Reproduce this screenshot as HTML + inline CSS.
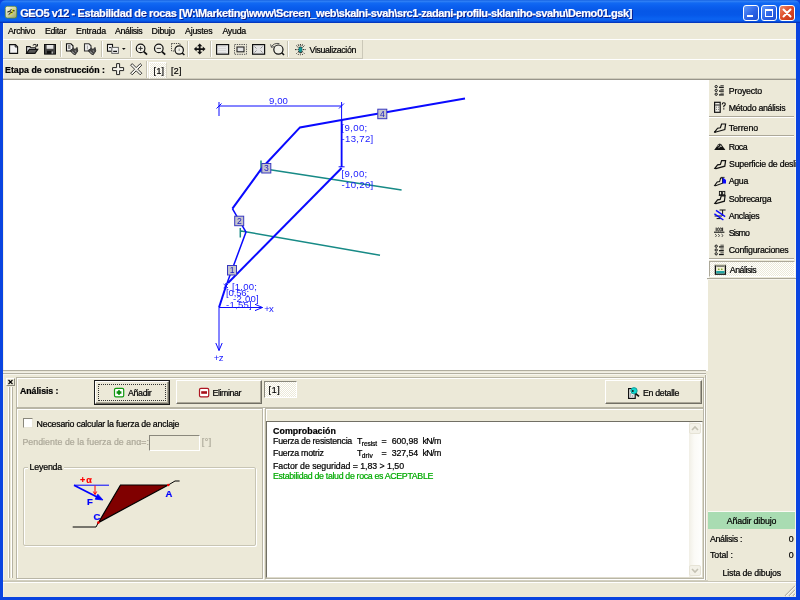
<!DOCTYPE html>
<html>
<head>
<meta charset="utf-8">
<title>GEO5 v12 - Estabilidad de rocas</title>
<style>
*{box-sizing:border-box;margin:0;padding:0}
html,body{width:800px;height:600px;overflow:hidden;background:#ece9d8}
body{font-family:"Liberation Sans",sans-serif;font-size:9px;color:#000;position:relative}
.a{position:absolute}
.t{position:absolute;white-space:nowrap;font-family:"Liberation Sans",sans-serif;-webkit-text-stroke:0.22px}
.hl{position:absolute;height:1px}
.vl{position:absolute;width:1px}
svg{position:absolute;overflow:visible}
#title{left:0;top:0;width:800px;height:23px;border-radius:6px 6px 0 0;background:linear-gradient(#0a56dc 0,#3484f6 1px,#1169f3 3px,#0b60ef 6px,#0657e7 11px,#0658e9 15px,#0b63f1 19px,#0a5cea 21px,#0540cc 22px,#032fb0 23px)}
.raised{border:1px solid #b9b6a6;box-shadow:inset 1px 1px 0 #fff,1px 1px 0 #fff}
.sunken{border:1px solid;border-color:#aca899 #fff #fff #aca899}
.btn{position:absolute;background:#ece9d8;border:1px solid;border-color:#fff #716f64 #716f64 #fff;box-shadow:inset -1px -1px 0 #aca899}
.sep{position:absolute;width:2px;border-left:1px solid #c5c2b2;border-right:1px solid #fff}
.hsep{position:absolute;height:2px;border-top:1px solid #aca899;border-bottom:1px solid #fff}
.chk{background-image:linear-gradient(45deg,#fff 25%,transparent 25%,transparent 75%,#fff 75%),linear-gradient(45deg,#fff 25%,transparent 25%,transparent 75%,#fff 75%);background-size:2px 2px;background-position:0 0,1px 1px;background-color:#ece9d8}

#txt{position:absolute;left:0;top:0;width:800px;height:600px;will-change:transform}

</style>
</head>
<body>
<!-- window frame -->
<div class="a" style="left:0;top:0;width:800px;height:600px;background:#0a44e0"></div>
<div id="title" class="a"></div>
<div class="a" style="left:3px;top:23px;width:793px;height:574px;background:#ece9d8"></div>
<div class="vl" style="left:3px;top:23px;height:574px;background:#f3f1e6"></div>
<!-- app icon -->
<svg style="left:5px;top:6.4px" width="12" height="12.4" viewBox="0 0 12 12.4"><defs><linearGradient id="ig" x1="0" y1="0" x2="1" y2="1"><stop offset="0" stop-color="#fbfbf0"/><stop offset="0.45" stop-color="#d4d8b0"/><stop offset="1" stop-color="#9aa458"/></linearGradient></defs><rect x="0.3" y="0.3" width="11.4" height="11.8" rx="2" fill="url(#ig)" stroke="#5d8a22" stroke-width="0.7"/><path d="M4 9.2 L7.4 7.4 L8.2 6 L8.8 3 L7.8 2.6 L6.8 5.6 L5.4 7.2 Z" fill="#dde614"/><path d="M2.4 6 L4.2 5.6 L6.4 3.2 M4.4 5.6 L7.4 6.6 M7.6 4.8 L9.6 4.8 M3.6 8.6 L5.6 7" stroke="#111" stroke-width="1" fill="none"/></svg>
<!-- caption buttons -->
<div class="a" style="left:743px;top:5px;width:16px;height:16px;border-radius:3px;border:1px solid #fff;background:linear-gradient(135deg,#5f98fa,#2c63e6 55%,#1f4fd0)"></div>
<div class="a" style="left:747px;top:15px;width:6px;height:2px;background:#fff"></div>
<div class="a" style="left:761px;top:5px;width:16px;height:16px;border-radius:3px;border:1px solid #fff;background:linear-gradient(135deg,#5f98fa,#2c63e6 55%,#1f4fd0)"></div>
<div class="a" style="left:765px;top:9px;width:8px;height:8px;border:1px solid #fff;border-top-width:2px"></div>
<div class="a" style="left:779px;top:5px;width:16px;height:16px;border-radius:3px;border:1px solid #fff;background:linear-gradient(135deg,#ee8a6a,#dc4a26 50%,#c13214)"></div>
<svg style="left:779px;top:5px" width="16" height="16" viewBox="0 0 16 16"><path d="M4.5 4.5 L11.5 11.5 M11.5 4.5 L4.5 11.5" stroke="#fff" stroke-width="2" stroke-linecap="round"/></svg>

<!-- menu / toolbars -->
<div class="hl" style="left:3px;top:39px;width:793px;background:#fff"></div>
<div class="hl" style="left:3px;top:58px;width:360px;background:#cbc8b8"></div>
<div class="vl" style="left:362px;top:40px;height:19px;background:#cbc8b8"></div>
<div class="hl" style="left:3px;top:59px;width:793px;background:#fff"></div>
<div class="hl" style="left:3px;top:78px;width:793px;background:#cfccbc"></div>
<div class="hl" style="left:3px;top:79px;width:793px;background:#98958a"></div>
<!-- toolbar1 separators -->
<div class="sep" style="left:60px;top:41px;height:16px"></div>
<div class="sep" style="left:101px;top:41px;height:16px"></div>
<div class="sep" style="left:130px;top:41px;height:16px"></div>
<div class="sep" style="left:187px;top:41px;height:16px"></div>
<div class="sep" style="left:210px;top:41px;height:16px"></div>
<div class="sep" style="left:287px;top:41px;height:16px"></div>
<!-- toolbar2 -->
<div class="sep" style="left:146px;top:61px;height:17px"></div>
<div class="a chk" style="left:149px;top:62px;width:18px;height:17px;border:1px solid;border-color:#fff #d8d5c6 #d8d5c6 #fff"></div>

<!-- canvas -->
<div class="a" style="left:4px;top:80px;width:703.5px;height:291px;background:#fff"></div>
<div class="hl" style="left:3px;top:370px;width:703px;background:#b0ad9f"></div>
<div class="hl" style="left:3px;top:371px;width:703px;background:#ebe8d9"></div>
<div class="hl" style="left:3px;top:372px;width:703px;background:#f2f0e6"></div>
<div class="hl" style="left:3px;top:373px;width:703px;background:#b3b0a2"></div>
<div class="hl" style="left:3px;top:374px;width:703px;background:#f7f6ee"></div>
<div class="vl" style="left:705px;top:375px;height:206px;background:#b3b0a2"></div>
<div class="vl" style="left:706px;top:375px;height:206px;background:#f7f6ee"></div>
<!-- canvas drawing -->
<svg style="left:0;top:0" width="800" height="600" viewBox="0 0 800 600" fill="none">
  <g stroke="#0a0aff" stroke-width="1">
    <path d="M219 106 H341.6 M219 102 V116 M341.6 102 V167 M216.5 108.5 L221.5 103.5 M339 108.5 L344 103.5"/>
    <path d="M338.6 166.8 H344.6"/><path d="M341.6 120 V167" stroke-width="1.8"/><path d="M223.6 284 L228 288 M228 284 L223.6 288 M225.8 283 V289" stroke-width="0.9"/>
    <path d="M219 307.5 H262.5 M255 304.3 L262.5 307.5 L255 310.6"/>
    <path d="M219 307.5 V350.5 M215.8 343 L219 350.5 L222.2 343"/>
  </g>
  <!-- anchors -->
  <g stroke="#178a86" stroke-width="1.5">
    <path d="M262 168.4 L401.6 190 M261 160.6 V172.5"/>
    <path d="M241 231 L380 255.2 M240.3 228 V237.5"/>
  </g>
  <!-- terrain + slip surface -->
  <g stroke="#0a0aff" stroke-width="2" stroke-linejoin="miter">
    <path d="M219 307.5 L226 286"/><path d="M226 286 L246 232 L232.4 208.6" stroke-width="1.5"/><path d="M232.4 208.6 L262 168 L300 127.4 L341.6 120 L465 98.6"/>
    <path d="M341.6 168 L228 283"/>
  </g>
  <!-- node boxes -->
  <g fill="#c4c4cc" stroke="#3838c0" stroke-width="1">
    <rect x="227.5" y="265.5" width="9" height="9.5"/>
    <rect x="234.7" y="216.2" width="9" height="9.5"/>
    <rect x="261.8" y="163.5" width="9" height="9.5"/>
    <rect x="377.8" y="109.2" width="9" height="9.5"/>
  </g>
</svg>
<!-- side panel -->
<div class="vl" style="left:708px;top:80px;height:199px;background:#fff"></div>
<div class="vl" style="left:795px;top:80px;height:502px;background:#f6f4ec"></div>
<div class="hsep" style="left:709px;top:116px;width:85px"></div>
<div class="hsep" style="left:709px;top:135px;width:85px"></div>
<div class="hsep" style="left:709px;top:258px;width:85px"></div>
<div class="a chk" style="left:709px;top:261px;width:86px;height:16px;border:1px solid;border-color:#aca899 #fff #fff #aca899"></div>
<div class="hl" style="left:707px;top:278px;width:89px;background:#aca899"></div>
<div class="hl" style="left:707px;top:279px;width:89px;background:#f6f4ec"></div>
<div class="a" style="left:728.75px;top:157.5px;width:66.5px;height:13px;overflow:hidden;will-change:transform"><div class="t" style="left:0;top:0;font-size:8.8px;line-height:12px;letter-spacing:-0.22px">Superficie de deslizamiento</div></div>
<div class="a" style="left:708px;top:511px;width:87px;height:18px;background:#a9dcb2;border-top:1px solid #fbfaf4"></div>

<!-- bottom dock -->
<div class="a" style="left:6px;top:378px;width:9px;height:8px;border:1px solid;border-color:#fff #8a887c #8a887c #fff;background:#ece9d8"></div>
<svg style="left:6px;top:378px" width="9" height="8" viewBox="0 0 9 8"><path d="M2.5 2 L6.5 6 M6.5 2 L2.5 6" stroke="#000" stroke-width="1.1"/></svg>
<div class="vl" style="left:8px;top:387px;height:191px;background:#fff"></div>
<div class="vl" style="left:9px;top:387px;height:191px;background:#b5b2a2"></div>
<div class="vl" style="left:11px;top:387px;height:191px;background:#fff"></div>
<div class="vl" style="left:12px;top:387px;height:191px;background:#b5b2a2"></div>
<!-- row 1 -->
<div class="a raised" style="left:16px;top:377px;width:688px;height:31px"></div>
<div class="a" style="left:94px;top:380px;width:76px;height:25px;border:1px solid #1c1c1c"></div>
<div class="btn" style="left:95px;top:381px;width:74px;height:23px"></div>
<div class="a" style="left:98px;top:384px;width:68px;height:17px;border:1px dotted #333"></div>
<div class="btn" style="left:176px;top:380px;width:86px;height:24px"></div>
<div class="a chk" style="left:264px;top:381px;width:33px;height:17px;border:1px solid;border-color:#8a887c #fff #fff #8a887c"></div>
<div class="btn" style="left:605px;top:380px;width:97px;height:24px"></div>
<!-- row 2 -->
<div class="a raised" style="left:16px;top:408px;width:247px;height:171px"></div>
<div class="a raised" style="left:265px;top:408px;width:439px;height:171px"></div>
<div class="a" style="left:23px;top:418px;width:10px;height:10px;background:#fff;border:1px solid;border-color:#8a887c #e8e5d6 #e8e5d6 #8a887c"></div>
<div class="a" style="left:149px;top:435px;width:51px;height:16px;background:#ece9d8;border:1px solid;border-color:#8a887c #fff #fff #8a887c"></div>
<div class="a" style="left:22.5px;top:467px;width:233px;height:78.5px;border:1px solid #c8c5b4;border-radius:2px;box-shadow:1px 1px 0 #fff, inset 1px 1px 0 #fff"></div>
<!-- results box -->
<div class="a" style="left:266px;top:421px;width:437px;height:157px;background:#fff;border:1px solid;border-color:#716f64 #dedbcc #dedbcc #716f64"></div>
<div class="a" style="left:689px;top:422px;width:13px;height:155px;background:linear-gradient(90deg,#f1efe6,#fbfaf6 40%,#fefefd)"></div>
<div class="a" style="left:689px;top:423px;width:12px;height:11px;background:#f3f1e8;border:1px solid #e6e3d6;border-radius:2px"></div>
<div class="a" style="left:689px;top:565px;width:12px;height:11px;background:#f3f1e8;border:1px solid #e6e3d6;border-radius:2px"></div>
<svg style="left:689px;top:423px" width="12" height="11" viewBox="0 0 12 11"><path d="M3 7 L6 4 L9 7" stroke="#c4c1b3" stroke-width="1.6" fill="none"/></svg>
<svg style="left:689px;top:565px" width="12" height="11" viewBox="0 0 12 11"><path d="M3 4 L6 7 L9 4" stroke="#c4c1b3" stroke-width="1.6" fill="none"/></svg>
<!-- status bar -->
<div class="hl" style="left:3px;top:580px;width:705px;background:#d2cfbf"></div>
<div class="hl" style="left:3px;top:581px;width:793px;background:#c9c6b6"></div>
<div class="hl" style="left:3px;top:582px;width:793px;background:#fff"></div>
<svg style="left:783px;top:584px" width="13" height="13" viewBox="0 0 13 13"><path d="M12 2 L2 12 M12 6 L6 12 M12 10 L10 12" stroke="#b8b5a6" stroke-width="1.2"/><path d="M13 2 L3 12 M13 6 L7 12 M13 10 L11 12" stroke="#fff" stroke-width="0.8"/></svg>
<!-- legend drawing -->
<svg style="left:0;top:0" width="800" height="600" viewBox="0 0 800 600" fill="none">
  <path d="M72.7 527 H96 L98.4 522.6 M168.3 485 L175 481 H179.6" stroke="#000" stroke-width="1"/>
  <path d="M120.5 485 L168.3 485 L98.4 522.6 Z" fill="#800000" stroke="#000" stroke-width="1.2"/>
  <path d="M74 485.2 H109" stroke="#0000ff" stroke-width="1"/>
  <path d="M74 485.2 L101 499" stroke="#0000ff" stroke-width="1.8"/>
  <path d="M103 500 L95.2 499.2 L97.8 494.2 Z" fill="#0000ff" stroke="#0000ff" stroke-width="0.8"/>
  <path d="M95 485.5 V494 M93.3 491.5 L95 494.6 L96.7 491.5" stroke="#ff0000" stroke-width="1"/>
  <circle cx="168.3" cy="485" r="1.3" fill="#ff0000"/>
  <circle cx="98.4" cy="522.6" r="1.3" fill="#ff0000"/>
</svg>
<!-- toolbar icons -->
<svg style="left:0;top:0" width="400" height="80" viewBox="0 0 400 80" fill="none">
  <!-- new -->
  <path d="M9.6 44.6 H15.4 L17.6 46.8 V53.4 H9.6 Z" fill="#f2f2f2" stroke="#111" stroke-width="1.1"/>
  <path d="M15.2 44.6 V47 H17.6" stroke="#111" stroke-width="0.9"/>
  <!-- open -->
  <path d="M26.6 53.4 V46.6 H30 L31 47.8 H35.6 V49.4" stroke="#111" stroke-width="1.1" fill="#e4e4e4"/>
  <path d="M26.6 53.4 L29.4 49.4 H37.8 L35 53.4 Z" fill="#555" stroke="#111" stroke-width="1.1"/>
  <path d="M32.8 45.2 Q35 43.6 36.6 45.2 M37.4 44 V46.2 H35.2" stroke="#111" stroke-width="1"/>
  <!-- save -->
  <rect x="44.5" y="44.5" width="11" height="9.6" fill="#444" stroke="#111" stroke-width="1"/>
  <rect x="46.6" y="45" width="6.8" height="3.8" fill="#e4e4e4"/>
  <rect x="47" y="50.8" width="6" height="3" fill="#111"/>
  <rect x="51.6" y="51.4" width="1.2" height="2.2" fill="#ddd"/>
  <!-- doc+hand 1 -->
  <path d="M66.5 43.8 H71 L73 45.8 V51 H66.5 Z" fill="#f4f4f4" stroke="#111" stroke-width="1.1"/>
  <path d="M68 46 H70.5 M68 48 H70.5" stroke="#111" stroke-width="0.9"/>
  <path d="M70 50.5 L73 53.8 L75.2 54.8 L77.8 51 L77 47.4 L75 49.6 L73.5 48.2 Z" fill="#444" stroke="#222" stroke-width="0.8"/>
  <path d="M72 51.6 L74.6 53.6 M74.8 50.6 L76.2 51.6" stroke="#bbb" stroke-width="0.8"/>
  <!-- doc+hand 2 -->
  <path d="M84.5 43.8 H89 L91 45.8 V51 H84.5 Z" fill="#eee" stroke="#333" stroke-width="1.1"/>
  <path d="M87.4 45.6 V49.4" stroke="#999" stroke-width="0.9"/>
  <path d="M88 50.5 L91 53.8 L93.2 54.8 L95.8 51 L95 47.4 L93 49.6 L91.5 48.2 Z" fill="#444" stroke="#222" stroke-width="0.8"/>
  <path d="M90 51.6 L92.6 53.6 M92.8 50.6 L94.2 51.6" stroke="#bbb" stroke-width="0.8"/>
  <!-- copy -->
  <rect x="107.5" y="44.4" width="5" height="6.8" fill="#f4f4f4" stroke="#111" stroke-width="1.1"/>
  <path d="M109 47.6 H111" stroke="#111" stroke-width="0.9"/>
  <rect x="111.8" y="47.4" width="6.6" height="6" fill="#f4f4f4" stroke="#666" stroke-width="1"/>
  <path d="M113.2 51.4 H117" stroke="#111" stroke-width="1.3"/>
  <path d="M122 48 H125.6 L123.8 49.9 Z" fill="#111"/>
  <!-- zoom in -->
  <circle cx="140.6" cy="48.4" r="4.3" stroke="#111" stroke-width="1.2" fill="#f0efe6"/>
  <path d="M138.4 48.4 H142.8 M140.6 46.2 V50.6" stroke="#333" stroke-width="1"/>
  <path d="M143.8 51.6 L147 54.6" stroke="#111" stroke-width="1.8"/>
  <!-- zoom out -->
  <circle cx="158.8" cy="48.4" r="4.3" stroke="#111" stroke-width="1.2" fill="#f0efe6"/>
  <path d="M156.6 48.4 H161" stroke="#333" stroke-width="1"/>
  <path d="M162 51.6 L165.2 54.6" stroke="#111" stroke-width="1.8"/>
  <!-- zoom window -->
  <rect x="171.5" y="43.5" width="8.5" height="7.5" stroke="#333" stroke-width="0.9" stroke-dasharray="1.2 1"/>
  <circle cx="179.2" cy="50" r="4.2" stroke="#111" stroke-width="1.2" fill="#f0efe6"/>
  <path d="M179.2 48.6 V51" stroke="#777" stroke-width="0.8"/>
  <path d="M182.2 53 L184.4 55" stroke="#111" stroke-width="1.6"/>
  <!-- move -->
  <path d="M199.7 43.4 L202.3 46.3 H200.6 V48.2 H202.8 V46.4 L205.5 49 L202.8 51.6 V49.9 H200.6 V51.7 H202.3 L199.7 54.5 L197.1 51.7 H198.8 V49.9 H196.6 V51.6 L193.9 49 L196.6 46.4 V48.2 H198.8 V46.3 H197.1 Z" fill="#111"/>
  <!-- rect 1 -->
  <rect x="216.6" y="44.6" width="12" height="9.6" fill="#e9e9e9" stroke="#111" stroke-width="1.2"/>
  <path d="M218.5 46.5 H226.5 M218.5 48.5 H226.5 M218.5 50.5 H226.5 M218.5 52.5 H226.5" stroke="#bcbcbc" stroke-width="0.7" stroke-dasharray="1 1"/>
  <!-- rect 2 -->
  <rect x="234.5" y="44.5" width="12" height="9.8" stroke="#444" stroke-width="0.9" stroke-dasharray="1.3 1"/>
  <rect x="237" y="47" width="7" height="4.8" fill="#e4e4e4" stroke="#222" stroke-width="1.1"/>
  <!-- rect 3 -->
  <rect x="252.6" y="44.6" width="12" height="9.6" fill="#e4e4e4" stroke="#111" stroke-width="1.2"/>
  <path d="M254.5 46.5 L256.5 48.5 M262.5 46.5 L260.5 48.5 M254.5 52.5 L256.5 50.5 M262.5 52.5 L260.5 50.5" stroke="#888" stroke-width="0.9"/>
  <!-- zoom prev -->
  <circle cx="278.4" cy="49.6" r="4.6" stroke="#111" stroke-width="1.2" fill="#f0efe6"/>
  <path d="M271.4 46.8 Q274 42.6 279.4 43.6 M270.6 44.4 L271.4 47.4 L274.2 46.6" stroke="#444" stroke-width="0.9"/>
  <path d="M281.8 52.8 L284 55" stroke="#111" stroke-width="1.6"/>
  <!-- visualization -->
  <path d="M300.4 44 V55.2 M295 49.6 H306 M296.4 45.6 L304.4 53.6 M304.4 45.6 L296.4 53.6 M298.2 44.4 L302.6 54.8 M302.6 44.4 L298.2 54.8" stroke="#111" stroke-width="0.9" stroke-dasharray="1.6 1"/>
  <ellipse cx="300.4" cy="49.6" rx="1.7" ry="2.6" fill="#149a9a" stroke="#0b5a5a" stroke-width="0.5"/>
  <!-- tb2: plus and X -->
  <path d="M116.6 63.6 H119.6 V67.6 H123.6 V70.6 H119.6 V74.6 H116.6 V70.6 H112.6 V67.6 H116.6 Z" fill="#f6f5ee" stroke="#222" stroke-width="1"/>
  <path d="M130.6 65.2 L132.2 63.6 L136.2 67.6 L140.2 63.6 L141.8 65.2 L137.8 69.2 L141.8 73.2 L140.2 74.8 L136.2 70.8 L132.2 74.8 L130.6 73.2 L134.6 69.2 Z" fill="#f6f5ee" stroke="#222" stroke-width="0.9"/>
</svg>
<!-- side + button icons -->
<svg style="left:0;top:0" width="800" height="600" viewBox="0 0 800 600" fill="none">
  <!-- Proyecto / Configuraciones list icons -->
  <g stroke="#111">
    <circle cx="716.2" cy="86.6" r="1.15" stroke-width="1"/><path d="M719 87.3 H723.8" stroke-width="1.3"/><path d="M720.4 85.6 H723.8" stroke-width="0.7"/>
    <circle cx="716.2" cy="90.4" r="1.15" stroke-width="1"/><path d="M719 91.1 H723.8" stroke-width="1.3"/><path d="M720.4 89.4 H723.8" stroke-width="0.7"/>
    <circle cx="716.2" cy="94.2" r="1.15" stroke-width="1"/><path d="M719 94.9 H723.8" stroke-width="1.3"/><path d="M720.4 93.2 H723.8" stroke-width="0.7"/>
  </g>
  <g stroke="#111" transform="translate(0,159.6)">
    <circle cx="716.2" cy="86.6" r="1.15" stroke-width="1"/><path d="M719 87.3 H723.8" stroke-width="1.3"/><path d="M720.4 85.6 H723.8" stroke-width="0.7"/>
    <circle cx="716.2" cy="90.4" r="1.15" stroke-width="1"/><path d="M719 91.1 H723.8" stroke-width="1.3"/><path d="M720.4 89.4 H723.8" stroke-width="0.7"/>
    <circle cx="716.2" cy="94.2" r="1.15" stroke-width="1"/><path d="M719 94.9 H723.8" stroke-width="1.3"/><path d="M720.4 93.2 H723.8" stroke-width="0.7"/>
  </g>
  <!-- Metodo: calculator + ? -->
  <rect x="714.6" y="102.3" width="5.6" height="10" stroke="#111" stroke-width="1.2" fill="#f0efe8"/>
  <path d="M715.2 105 H719.6" stroke="#111" stroke-width="1"/>
  <path d="M716.2 107.2 H716.9 M718 107.2 H718.7 M716.2 109.4 H716.9 M718 109.4 H718.7" stroke="#444" stroke-width="1"/>
  <path d="M722.2 104.4 Q722.2 102.8 723.8 102.8 Q725.4 102.8 725.2 104.4 Q725 105.4 723.8 106 V107.2 M723.8 108.2 V109.4" stroke="#111" stroke-width="1.1"/>
  <!-- Terreno -->
  <path d="M714.8 131.8 L717.6 128.2 L720.4 127.8 L721.6 124 H725.6 L724.8 129.6 L716 132 Z" stroke="#111" stroke-width="1.2"/>
  <circle cx="715" cy="132" r="0.9" fill="#111"/>
  <!-- Roca -->
  <path d="M714.2 150 L718.2 144.4 L719.8 143.4 L721.4 144.4 L725.4 150 Z" fill="#111"/>
  <path d="M717.6 146.4 L719.2 145 M720.2 145 L722 146.8 M718.4 147.8 L721 146.2" stroke="#f2f0e4" stroke-width="0.7"/>
  <!-- Superficie -->
  <path d="M714.8 168.4 L717.6 164.8 L720.4 164.4 L721.6 160.6 H725.6 L724.8 166.2 L716 168.6 Z" stroke="#111" stroke-width="1.2"/>
  <!-- Agua -->
  <path d="M714.6 185.6 L717.2 182 L719.6 181.6 L720.6 178 H722.6 V183.2 L715.6 185.8 Z" stroke="#111" stroke-width="1.1"/>
  <path d="M722.6 177.2 L726 180 V183.6 H722.6 Z" fill="#0a0aff"/>
  <path d="M721 177.4 H724.6" stroke="#111" stroke-width="0.8"/>
  <!-- Sobrecarga -->
  <path d="M714.8 203.4 L717.6 199.8 L720.2 199.4 L721.2 196 H725 L724.4 201.2 L716 203.6 Z" stroke="#111" stroke-width="1.2"/>
  <rect x="719.4" y="191.4" width="2.2" height="3.4" stroke="#111" stroke-width="0.9"/><rect x="722.6" y="191.4" width="2.2" height="3.4" stroke="#111" stroke-width="0.9"/>
  <path d="M718.8 195.4 H725.6" stroke="#111" stroke-width="1"/>
  <!-- Anclajes -->
  <path d="M719.6 210 H725.6 M722.6 210 V216 M714.6 216 H722 M716.6 218.6 H720.6" stroke="#111" stroke-width="1"/>
  <path d="M716 210.4 L725.2 216.6 M714.4 213.8 L723.4 220" stroke="#0a0aff" stroke-width="1.4"/>
  <!-- Sismo -->
  <path d="M714 232.2 H724.4" stroke="#111" stroke-width="1.1"/>
  <path d="M716.2 227.6 V231.2 M722.6 227.6 V231.2" stroke="#111" stroke-width="0.9"/>
  <ellipse cx="718.4" cy="229.4" rx="0.9" ry="1.6" stroke="#111" stroke-width="0.8"/><ellipse cx="720.8" cy="229.4" rx="0.9" ry="1.6" stroke="#111" stroke-width="0.8"/>
  <path d="M715 234 L716.6 235.4 L715.4 237 M718 234 L719.6 235.4 L718.4 237 M721.4 234 L723 235.4 L721.8 237 " stroke="#333" stroke-width="0.8"/>
  <!-- Analisis -->
  <rect x="715.4" y="265.4" width="10" height="8.8" fill="#f4f2d8" stroke="#111" stroke-width="1.3"/>
  <path d="M715.4 265 H725.4" stroke="#f4f2d8" stroke-width="1.2"/>
  <path d="M716.4 266.4 H724.4" stroke="#555" stroke-width="0.8"/>
  <rect x="716.2" y="271" width="8.4" height="2.4" fill="#24a6a6"/>
  <circle cx="718.8" cy="269.2" r="0.8" fill="#6a9a10"/><circle cx="721.8" cy="269.2" r="0.8" fill="#6a9a10"/>
  <!-- Anadir -->
  <rect x="114.5" y="388.4" width="9.2" height="8.4" rx="1.4" fill="#fff" stroke="#119911" stroke-width="1.2"/>
  <path d="M119 390.2 H120 V391.2 H121.4 V393.8 H120 V394.8 H118 V393.8 H116.6 V391.2 H118 V390.2 Z" fill="#0c8e0c"/>
  <!-- Eliminar -->
  <rect x="199.5" y="388.4" width="9.2" height="8.4" rx="1.4" fill="#fff" stroke="#ae1622" stroke-width="1.2"/>
  <rect x="201.2" y="391.2" width="5.8" height="2.6" fill="#a80f1a"/>
  <!-- En detalle -->
  <rect x="628.6" y="388.6" width="6.6" height="9.8" fill="#f4f4f4" stroke="#111" stroke-width="1.2"/>
  <path d="M630.4 396 H631.2 M632.4 396 H633.2 M630.4 394 H631.2" stroke="#222" stroke-width="1"/>
  <circle cx="634" cy="390.8" r="3.2" fill="#12d6d0" stroke="#0f8f8c" stroke-width="0.8"/>
  <circle cx="632.8" cy="391" r="0.9" fill="#111"/>
  <path d="M635.6 393.6 L639 396.4" stroke="#111" stroke-width="1.8"/>
</svg>

<!-- text -->
<div id="txt">
<div class="t" style="left:20.20px;top:5.50px;font-size:11px;line-height:15px;letter-spacing:-0.405px;color:#fff;font-weight:bold;text-shadow:1px 1px 0 #0a1883;">GEO5 v12 - Estabilidad de rocas [W:\Marketing\www\Screen_web\skalni-svah\src1-zadani-profilu-sklaniho-svahu\Demo01.gsk]</div>
<div class="t" style="left:8.00px;top:25.40px;font-size:8.8px;line-height:12px;letter-spacing:-0.335px;color:#000;">Archivo</div>
<div class="t" style="left:45.00px;top:25.40px;font-size:8.8px;line-height:12px;letter-spacing:-0.331px;color:#000;">Editar</div>
<div class="t" style="left:76.00px;top:25.40px;font-size:8.8px;line-height:12px;letter-spacing:-0.116px;color:#000;">Entrada</div>
<div class="t" style="left:115.00px;top:25.40px;font-size:8.8px;line-height:12px;letter-spacing:-0.364px;color:#000;">Análisis</div>
<div class="t" style="left:151.60px;top:25.40px;font-size:8.8px;line-height:12px;letter-spacing:-0.259px;color:#000;">Dibujo</div>
<div class="t" style="left:185.00px;top:25.40px;font-size:8.8px;line-height:12px;letter-spacing:-0.208px;color:#000;">Ajustes</div>
<div class="t" style="left:222.40px;top:25.40px;font-size:8.8px;line-height:12px;letter-spacing:-0.239px;color:#000;">Ayuda</div>
<div class="t" style="left:309.60px;top:43.80px;font-size:8.8px;line-height:12px;letter-spacing:-0.368px;color:#000;">Visualización</div>
<div class="t" style="left:5.00px;top:63.60px;font-size:8.8px;line-height:12px;letter-spacing:0.012px;color:#000;font-weight:bold;">Etapa de construcción :</div>
<div class="t" style="left:153.60px;top:65.00px;font-size:8.8px;line-height:12px;letter-spacing:0.340px;color:#000;">[1]</div>
<div class="t" style="left:171.00px;top:65.00px;font-size:8.8px;line-height:12px;letter-spacing:0.273px;color:#000;">[2]</div>
<div class="t" style="left:728.75px;top:84.50px;font-size:8.8px;line-height:12px;letter-spacing:-0.184px;color:#000;">Proyecto</div>
<div class="t" style="left:728.75px;top:101.60px;font-size:8.8px;line-height:12px;letter-spacing:-0.308px;color:#000;">Método análisis</div>
<div class="t" style="left:728.75px;top:121.60px;font-size:8.8px;line-height:12px;letter-spacing:-0.083px;color:#000;">Terreno</div>
<div class="t" style="left:728.75px;top:140.75px;font-size:8.8px;line-height:12px;letter-spacing:-0.574px;color:#000;">Roca</div>
<div class="t" style="left:728.75px;top:175.25px;font-size:8.8px;line-height:12px;letter-spacing:-0.324px;color:#000;">Agua</div>
<div class="t" style="left:728.75px;top:192.75px;font-size:8.8px;line-height:12px;letter-spacing:-0.298px;color:#000;">Sobrecarga</div>
<div class="t" style="left:728.75px;top:209.60px;font-size:8.8px;line-height:12px;letter-spacing:-0.327px;color:#000;">Anclajes</div>
<div class="t" style="left:728.75px;top:227.10px;font-size:8.8px;line-height:12px;letter-spacing:-0.841px;color:#000;">Sismo</div>
<div class="t" style="left:728.75px;top:244.00px;font-size:8.8px;line-height:12px;letter-spacing:-0.255px;color:#000;">Configuraciones</div>
<div class="t" style="left:729.75px;top:264.00px;font-size:8.8px;line-height:12px;letter-spacing:-0.477px;color:#000;">Análisis</div>
<div class="t" style="left:726.70px;top:515.00px;font-size:8.8px;line-height:12px;letter-spacing:-0.135px;color:#000;">Añadir dibujo</div>
<div class="t" style="left:710.00px;top:533.00px;font-size:8.8px;line-height:12px;letter-spacing:-0.320px;color:#000;">Análisis :</div>
<div class="t" style="left:788.70px;top:533.00px;font-size:8.8px;line-height:12px;letter-spacing:-0.606px;color:#000;">0</div>
<div class="t" style="left:710.00px;top:548.70px;font-size:8.8px;line-height:12px;letter-spacing:-0.069px;color:#000;">Total :</div>
<div class="t" style="left:788.70px;top:548.70px;font-size:8.8px;line-height:12px;letter-spacing:-0.606px;color:#000;">0</div>
<div class="t" style="left:722.50px;top:566.80px;font-size:8.8px;line-height:12px;letter-spacing:-0.165px;color:#000;">Lista de dibujos</div>
<div class="t" style="left:20.00px;top:385.00px;font-size:8.8px;line-height:12px;letter-spacing:-0.071px;color:#000;font-weight:bold;">Análisis :</div>
<div class="t" style="left:128.00px;top:387.00px;font-size:8.8px;line-height:12px;letter-spacing:-0.340px;color:#000;">Añadir</div>
<div class="t" style="left:212.60px;top:387.00px;font-size:8.8px;line-height:12px;letter-spacing:-0.423px;color:#000;">Eliminar</div>
<div class="t" style="left:268.60px;top:384.40px;font-size:8.8px;line-height:12px;letter-spacing:0.673px;color:#000;">[1]</div>
<div class="t" style="left:643.00px;top:387.00px;font-size:8.8px;line-height:12px;letter-spacing:-0.314px;color:#000;">En detalle</div>
<div class="t" style="left:36.60px;top:417.60px;font-size:8.8px;line-height:12px;letter-spacing:-0.217px;color:#000;">Necesario calcular la fuerza de anclaje</div>
<div class="t" style="left:22.40px;top:436.40px;font-size:8.8px;line-height:12px;letter-spacing:0.046px;color:#aca899;">Pendiente de la fuerza de anα=:</div>
<div class="t" style="left:201.75px;top:436.40px;font-size:8.8px;line-height:12px;letter-spacing:0.531px;color:#aca899;">[°]</div>
<div class="t" style="left:29.60px;top:461.40px;font-size:8.8px;line-height:12px;letter-spacing:-0.195px;color:#000;background:#ece9d8;padding:0 2px;margin-left:-2px;">Leyenda</div>
<div class="t" style="left:273.00px;top:425.00px;font-size:8.8px;line-height:12px;letter-spacing:0.077px;color:#000;font-weight:bold;">Comprobación</div>
<div class="t" style="left:273.00px;top:435.00px;font-size:8.8px;line-height:12px;letter-spacing:-0.243px;color:#000;">Fuerza de resistencia</div>
<div class="t" style="left:273.00px;top:447.00px;font-size:8.8px;line-height:12px;letter-spacing:-0.245px;color:#000;">Fuerza motriz</div>
<div class="t" style="left:357.00px;top:435.00px;font-size:8.8px;line-height:12px;letter-spacing:-0.775px;color:#000;">T</div>
<div class="t" style="left:381.60px;top:435.00px;font-size:8.8px;line-height:12px;letter-spacing:0.859px;color:#000;">=</div>
<div class="t" style="left:422.50px;top:435.00px;font-size:8.8px;line-height:12px;letter-spacing:-0.570px;color:#000;">kN/m</div>
<div class="t" style="left:357.00px;top:447.00px;font-size:8.8px;line-height:12px;letter-spacing:-0.775px;color:#000;">T</div>
<div class="t" style="left:381.60px;top:447.00px;font-size:8.8px;line-height:12px;letter-spacing:0.859px;color:#000;">=</div>
<div class="t" style="left:422.50px;top:447.00px;font-size:8.8px;line-height:12px;letter-spacing:-0.570px;color:#000;">kN/m</div>
<div class="t" style="left:361.80px;top:439.10px;font-size:6.6px;line-height:9px;letter-spacing:-0.094px;color:#000;">resist</div>
<div class="t" style="left:361.80px;top:451.10px;font-size:6.6px;line-height:9px;letter-spacing:0.144px;color:#000;">driv</div>
<div class="t" style="left:391.75px;top:435.00px;font-size:8.8px;line-height:12px;letter-spacing:-0.109px;color:#000;">600,98</div>
<div class="t" style="left:391.75px;top:447.00px;font-size:8.8px;line-height:12px;letter-spacing:-0.109px;color:#000;">327,54</div>
<div class="t" style="left:273.00px;top:460.40px;font-size:8.8px;line-height:12px;letter-spacing:-0.047px;color:#000;">Factor de seguridad = 1,83 &gt; 1,50</div>
<div class="t" style="left:273.00px;top:470.25px;font-size:8.8px;line-height:12px;letter-spacing:-0.328px;color:#00aa00;">Estabilidad de talud de roca es ACEPTABLE</div>
<div class="t" style="left:269.00px;top:94.10px;font-size:9.6px;line-height:13px;letter-spacing:0.078px;color:#1a1aff;-webkit-text-stroke:0;">9,00</div>
<div class="t" style="left:341.60px;top:120.50px;font-size:9.6px;line-height:13px;letter-spacing:0.331px;color:#1a1aff;-webkit-text-stroke:0;">[9,00;</div>
<div class="t" style="left:341.60px;top:131.50px;font-size:9.6px;line-height:13px;letter-spacing:0.304px;color:#1a1aff;-webkit-text-stroke:0;">-13,72]</div>
<div class="t" style="left:341.60px;top:166.50px;font-size:9.6px;line-height:13px;letter-spacing:0.331px;color:#1a1aff;-webkit-text-stroke:0;">[9,00;</div>
<div class="t" style="left:341.60px;top:178.10px;font-size:9.6px;line-height:13px;letter-spacing:0.304px;color:#1a1aff;-webkit-text-stroke:0;">-10,20]</div>
<div class="t" style="left:232.00px;top:279.50px;font-size:9.6px;line-height:13px;letter-spacing:0.164px;color:#1a1aff;-webkit-text-stroke:0;">[1,00;</div>
<div class="t" style="left:226.00px;top:285.50px;font-size:9.6px;line-height:13px;letter-spacing:-0.169px;color:#1a1aff;-webkit-text-stroke:0;">[0,56;</div>
<div class="t" style="left:233.00px;top:291.50px;font-size:9.6px;line-height:13px;letter-spacing:0.242px;color:#1a1aff;-webkit-text-stroke:0;">-2,00]</div>
<div class="t" style="left:226.00px;top:297.50px;font-size:9.6px;line-height:13px;letter-spacing:0.242px;color:#1a1aff;-webkit-text-stroke:0;">-1,55]</div>
<div class="t" style="left:264.30px;top:301.80px;font-size:9.6px;line-height:13px;letter-spacing:-0.853px;color:#1a1aff;-webkit-text-stroke:0;">+x</div>
<div class="t" style="left:213.70px;top:351.30px;font-size:9.6px;line-height:13px;letter-spacing:-0.453px;color:#1a1aff;-webkit-text-stroke:0;">+z</div>
<div class="t" style="left:229.80px;top:264.20px;font-size:8.6px;line-height:12px;letter-spacing:-0.381px;color:#2020c0;-webkit-text-stroke:0;">1</div>
<div class="t" style="left:237.00px;top:215.00px;font-size:8.6px;line-height:12px;letter-spacing:-0.381px;color:#2020c0;-webkit-text-stroke:0;">2</div>
<div class="t" style="left:264.10px;top:162.20px;font-size:8.6px;line-height:12px;letter-spacing:-0.381px;color:#2020c0;-webkit-text-stroke:0;">3</div>
<div class="t" style="left:380.10px;top:108.00px;font-size:8.6px;line-height:12px;letter-spacing:-0.381px;color:#2020c0;-webkit-text-stroke:0;">4</div>
<div class="t" style="left:80.00px;top:473.50px;font-size:9px;line-height:13px;letter-spacing:1.102px;color:#ff0000;font-weight:bold;">+α</div>
<div class="t" style="left:87.00px;top:495.00px;font-size:9.5px;line-height:13px;letter-spacing:-0.812px;color:#0000ff;font-weight:bold;">F</div>
<div class="t" style="left:165.50px;top:486.50px;font-size:9.5px;line-height:13px;letter-spacing:-0.875px;color:#0000ff;font-weight:bold;">A</div>
<div class="t" style="left:93.50px;top:510.20px;font-size:9.5px;line-height:13px;letter-spacing:-0.975px;color:#0000ff;font-weight:bold;">C</div>
</div>
</body>
</html>
